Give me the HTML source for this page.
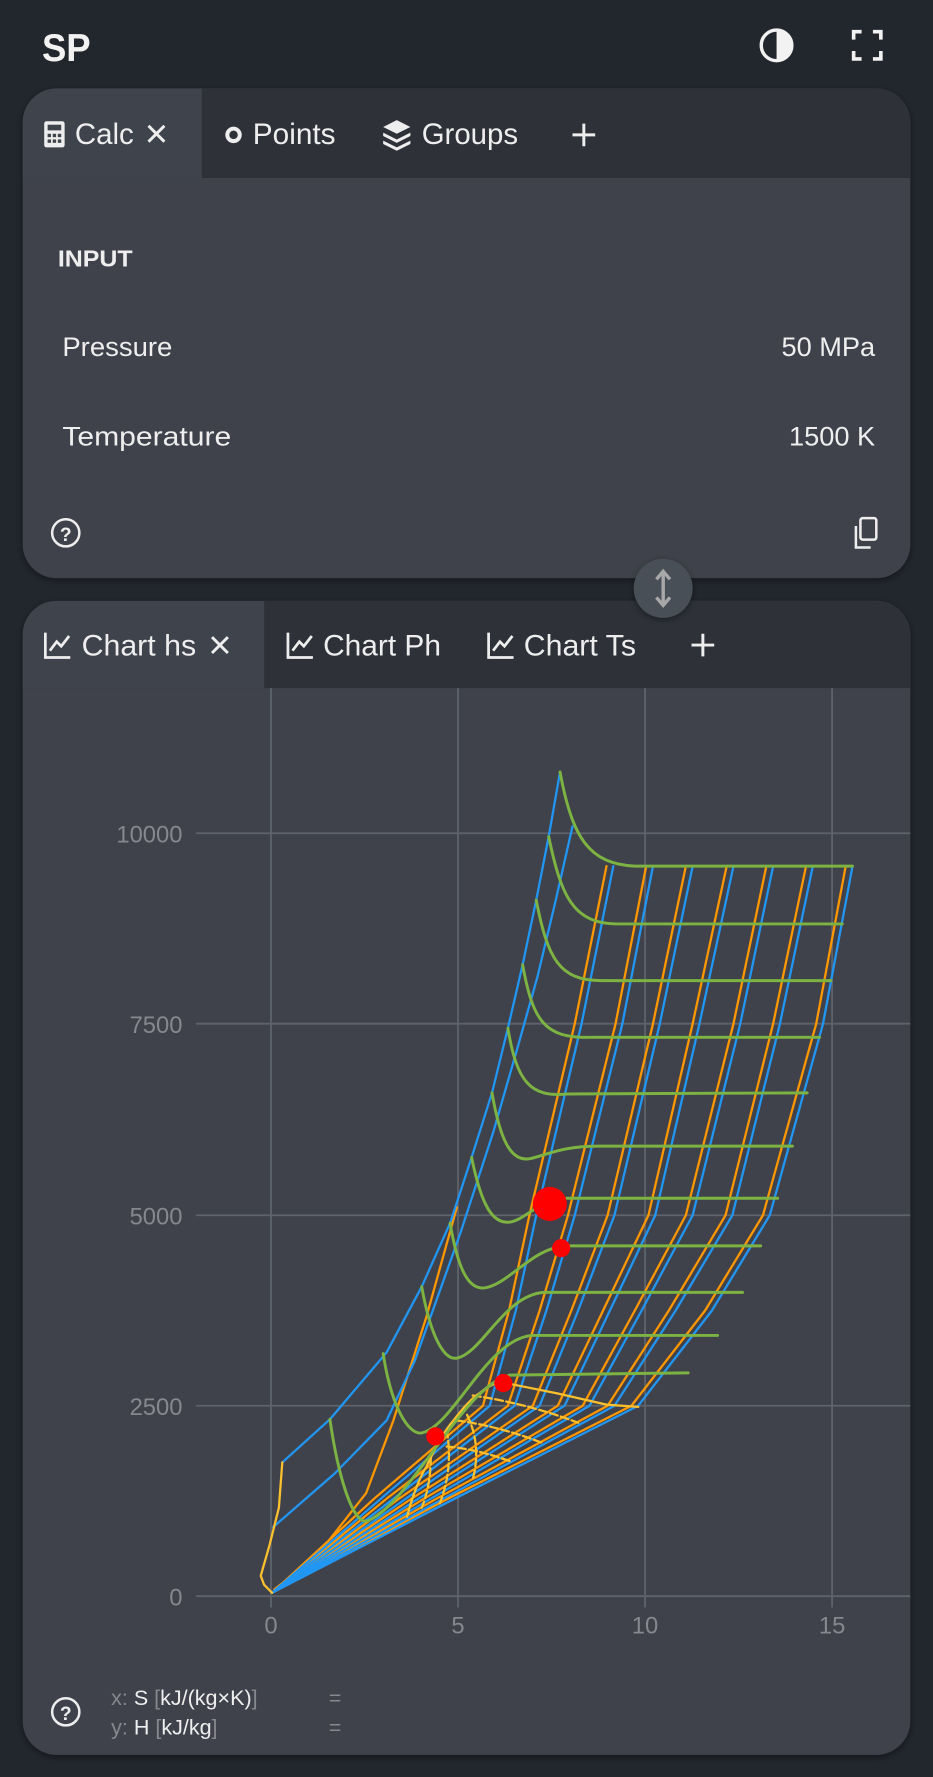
<!DOCTYPE html>
<html><head><meta charset="utf-8">
<style>
html,body{margin:0;padding:0;background:#22262d;}
svg{display:block;}
text{font-family:"Liberation Sans",sans-serif;}
</style></head>
<body>
<svg width="933" height="1777" viewBox="0 0 823 1567.5" xmlns="http://www.w3.org/2000/svg">
<defs>
<clipPath id="p1"><rect x="20" y="78" width="783" height="432" rx="30"/></clipPath>
<clipPath id="p2"><rect x="20" y="530" width="783" height="1018" rx="30"/></clipPath>
<filter id="sh" x="-10%" y="-10%" width="120%" height="120%"><feDropShadow dx="0" dy="2" stdDeviation="3" flood-color="#000" flood-opacity="0.4"/></filter>
</defs>
<rect width="823" height="1568" fill="#22262d"/>

<!-- header -->
<text x="37" y="54" font-size="34" font-weight="bold" fill="#f2f2f2" textLength="43" lengthAdjust="spacingAndGlyphs">SP</text>
<circle cx="685" cy="40" r="13.5" fill="none" stroke="#f2f2f2" stroke-width="3"/>
<path d="M685,26.5 A13.5,13.5 0 0 1 685,53.5 Z" fill="#f2f2f2"/>
<g fill="none" stroke="#f2f2f2" stroke-width="3.2">
<path d="M753,35 V28 H760"/><path d="M770,28 H777 V35"/><path d="M777,45 V52 H770"/><path d="M760,52 H753 V45"/>
</g>

<!-- panel 1 -->
<g filter="url(#sh)"><rect x="20" y="78" width="783" height="432" rx="30" fill="#3f434b"/></g>
<g clip-path="url(#p1)">
<rect x="20" y="78" width="783" height="79" fill="#2e3238"/>
<rect x="20" y="78" width="158" height="79" fill="#3f434b"/>
</g>
<rect x="39" y="107" width="18" height="23" rx="2" fill="#eeeeee"/>
<rect x="42" y="110" width="12" height="5" fill="#3f434b"/>
<g fill="#3f434b"><rect x="42" y="118" width="3" height="3"/><rect x="46.5" y="118" width="3" height="3"/><rect x="51" y="118" width="3" height="3"/><rect x="42" y="123" width="3" height="3"/><rect x="46.5" y="123" width="3" height="3"/><rect x="51" y="123" width="3" height="3"/></g>
<text x="66" y="127" font-size="26" fill="#eeeeee" textLength="52" lengthAdjust="spacingAndGlyphs">Calc</text>
<path d="M131,111 L145,125 M145,111 L131,125" stroke="#eeeeee" stroke-width="2.6"/>
<circle cx="206" cy="119" r="5.5" fill="none" stroke="#eeeeee" stroke-width="3.5"/>
<text x="223" y="127" font-size="26" fill="#eeeeee" textLength="73" lengthAdjust="spacingAndGlyphs">Points</text>
<g fill="#eeeeee"><path d="M350,106 L362,112 L350,118 L338,112 Z"/><path d="M338,117 L350,123 L362,117 L362,120 L350,126 L338,120 Z"/><path d="M338,124 L350,130 L362,124 L362,127 L350,133 L338,127 Z"/></g>
<text x="372" y="127" font-size="26" fill="#eeeeee" textLength="85" lengthAdjust="spacingAndGlyphs">Groups</text>
<path d="M515,109 V129 M505,119 H525" stroke="#eeeeee" stroke-width="2.6"/>

<text x="51" y="235" font-size="20" font-weight="bold" fill="#eeeeee" textLength="66" lengthAdjust="spacingAndGlyphs">INPUT</text>
<text x="55" y="314" font-size="24" fill="#eeeeee" textLength="97" lengthAdjust="spacingAndGlyphs">Pressure</text>
<text x="772" y="314" font-size="24" fill="#eeeeee" text-anchor="end">50 MPa</text>
<text x="55" y="393" font-size="24" fill="#eeeeee" textLength="149" lengthAdjust="spacingAndGlyphs">Temperature</text>
<text x="772" y="393" font-size="24" fill="#eeeeee" text-anchor="end">1500 K</text>
<circle cx="58" cy="470" r="12" fill="none" stroke="#eeeeee" stroke-width="2.2"/>
<text x="58" y="477" font-size="17" font-weight="bold" fill="#eeeeee" text-anchor="middle">?</text>
<g fill="none" stroke="#eeeeee" stroke-width="2.2"><rect x="759" y="457" width="14" height="19" rx="2"/><path d="M755,464 V483 H768"/></g>

<!-- panel 2 -->
<g filter="url(#sh)"><rect x="20" y="530" width="783" height="1018" rx="30" fill="#3f434b"/></g>
<g clip-path="url(#p2)">
<rect x="20" y="530" width="783" height="77" fill="#2e3238"/>
<rect x="20" y="530" width="213" height="77" fill="#3f434b"/>
</g>
<circle cx="585" cy="519" r="26" fill="#4a4f57" filter="url(#sh)"/>
<path d="M585,505 V533 M579,511 L585,504 L591,511 M579,527 L585,534 L591,527" fill="none" stroke="#a8a8a8" stroke-width="3"/>

<g fill="none" stroke="#eeeeee" stroke-width="2.4">
<path d="M40,558 V580 H62 M44,574 L50,566 L54,570 L61,561"/>
<path d="M254,558 V580 H276 M258,574 L264,566 L268,570 L275,561"/>
<path d="M431,558 V580 H453 M435,574 L441,566 L445,570 L452,561"/>
</g>
<text x="72" y="578" font-size="26" fill="#eeeeee" textLength="101" lengthAdjust="spacingAndGlyphs">Chart hs</text>
<path d="M187,562 L201,576 M201,562 L187,576" stroke="#eeeeee" stroke-width="2.6"/>
<text x="285" y="578" font-size="26" fill="#eeeeee" textLength="104" lengthAdjust="spacingAndGlyphs">Chart Ph</text>
<text x="462" y="578" font-size="26" fill="#eeeeee" textLength="99" lengthAdjust="spacingAndGlyphs">Chart Ts</text>
<path d="M620,559 V579 M610,569 H630" stroke="#eeeeee" stroke-width="2.6"/>

<!-- grid -->
<g stroke="#5e636b" stroke-width="1.6">
<path d="M239,607 V1418 M404,607 V1418 M569,607 V1418 M734,607 V1418"/>
<path d="M173,735 H803 M173,903 H803 M173,1072 H803 M173,1240 H803 M173,1408 H803"/>
</g>
<g font-size="21" fill="#85888e" text-anchor="end">
<text x="161" y="743">10000</text><text x="161" y="911">7500</text><text x="161" y="1080">5000</text><text x="161" y="1248">2500</text><text x="161" y="1416">0</text>
</g>
<g font-size="21" fill="#85888e" text-anchor="middle">
<text x="239" y="1441">0</text><text x="404" y="1441">5</text><text x="569" y="1441">10</text><text x="734" y="1441">15</text>
</g>

<!-- curves -->
<g fill="none" stroke-linejoin="round" stroke-linecap="round">
<g stroke="#ff9800" stroke-width="2">
<polyline points="240,1405 330,1322 426,1240 449,1156 467,1072 507,903 535,764"/>
<polyline points="240,1405 341,1322 448,1240 476,1156 501,1072 543,903 570,764"/>
<polyline points="240,1405 352,1322 470,1240 504,1156 536,1072 576,903 605,764"/>
<polyline points="240,1405 363,1322 492,1240 532,1156 572,1072 611,903 641,764"/>
<polyline points="240,1405 374,1322 514,1240 560,1156 605,1072 647,903 676,764"/>
<polyline points="240,1405 385,1322 536,1240 590,1156 640,1072 682,903 711,764"/>
<polyline points="240,1405 395,1322 557,1240 622,1156 673,1072 720,903 746,764"/>
<polyline points="242,1402 279,1373 323,1317 347,1253 376,1162 403,1065"/>
</g>
<g stroke="#2196f3" stroke-width="2">
<polyline points="240,1405 336,1322 432,1240 455,1156 473,1072 513,903 541,764"/>
<polyline points="240,1405 347,1322 454,1240 482,1156 507,1072 549,903 576,764"/>
<polyline points="240,1405 358,1322 476,1240 510,1156 542,1072 582,903 611,764"/>
<polyline points="240,1405 369,1322 498,1240 538,1156 578,1072 617,903 647,764"/>
<polyline points="240,1405 380,1322 520,1240 566,1156 611,1072 653,903 682,764"/>
<polyline points="240,1405 391,1322 542,1240 596,1156 646,1072 688,903 717,764"/>
<polyline points="240,1405 401,1322 563,1240 628,1156 679,1072 726,903 752,764"/>
<polyline points="249,1290 291,1252 341,1193 372,1135 397,1079 416,1021 434,964 448,907 461,851 473,794 484,738 494,681"/>
<polyline points="241,1347 295,1300 341,1253 366,1200 385,1147 406,1088 435,999 456,926 474,862 490,795 505,729"/>
</g>
<g stroke="#fbc02d" stroke-width="2">
<polyline points="249,1290 246,1330 238,1362 230,1390 233,1398 240,1405"/>
<path d="M359,1338 C365,1315 372,1300 376,1294 C385,1275 392,1262 400,1253 C410,1240 418,1232 423,1229 C430,1223 436,1220 441,1220 C448,1220 452,1221 456,1222 L491,1229 L535,1239 L563,1241"/>
<g stroke-dasharray="7 3">
<path d="M417,1231 Q465,1238 510,1255"/>
<path d="M403,1253 Q440,1258 479,1273"/>
<path d="M394,1276 Q420,1278 450,1289"/>
<path d="M394,1261 Q400,1295 388,1326"/>
<path d="M412,1248 Q425,1275 417,1305"/>
<path d="M380,1285 Q380,1310 372,1330"/>
</g>
</g>
<g stroke="#7cb342" stroke-width="2.6">
<path d="M494,681 C505,740 520,762 560,764 L752,764"/>
<path d="M484,738 C495,790 505,815 545,815 L743,815"/>
<path d="M473,794 C483,845 493,865 530,865 L733,865"/>
<path d="M461,851 C470,900 480,916 520,915 L723,915"/>
<path d="M448,907 C456,955 468,968 500,965 L712,964"/>
<path d="M434,964 C442,1010 452,1025 468,1022 C485,1018 495,1011 530,1011 L699,1011"/>
<path d="M416,1021 C425,1065 435,1080 450,1078 C465,1075 475,1058 500,1057 L686,1057"/>
<path d="M397,1079 C405,1125 415,1138 428,1136 C450,1132 470,1100 500,1099 L671,1099"/>
<path d="M372,1135 C380,1180 392,1200 403,1198 C425,1194 445,1142 480,1140 L655,1140"/>
<path d="M338,1194 C345,1240 360,1266 372,1264 C400,1258 430,1180 470,1178 L633,1178"/>
<path d="M291,1252 C298,1300 310,1342 323,1342 C360,1330 410,1220 450,1213 L607,1211"/>
</g>
</g>
<g fill="#ff0000">
<circle cx="485" cy="1062" r="15"/>
<circle cx="495" cy="1101" r="8"/>
<circle cx="444" cy="1220" r="8"/>
<circle cx="384" cy="1267" r="8"/>
</g>

<!-- footer legend -->
<circle cx="58" cy="1510" r="12" fill="none" stroke="#eeeeee" stroke-width="2.2"/>
<text x="58" y="1517" font-size="17" font-weight="bold" fill="#eeeeee" text-anchor="middle">?</text>
<g font-size="19">
<text x="98" y="1504"><tspan fill="#85888e">x: </tspan><tspan fill="#eeeeee">S </tspan><tspan fill="#85888e">[</tspan><tspan fill="#eeeeee">kJ/(kg×K)</tspan><tspan fill="#85888e">]</tspan></text>
<text x="98" y="1530"><tspan fill="#85888e">y: </tspan><tspan fill="#eeeeee">H </tspan><tspan fill="#85888e">[</tspan><tspan fill="#eeeeee">kJ/kg</tspan><tspan fill="#85888e">]</tspan></text>
<text x="290" y="1504" fill="#85888e">=</text>
<text x="290" y="1530" fill="#85888e">=</text>
</g>
</svg>
</body></html>
